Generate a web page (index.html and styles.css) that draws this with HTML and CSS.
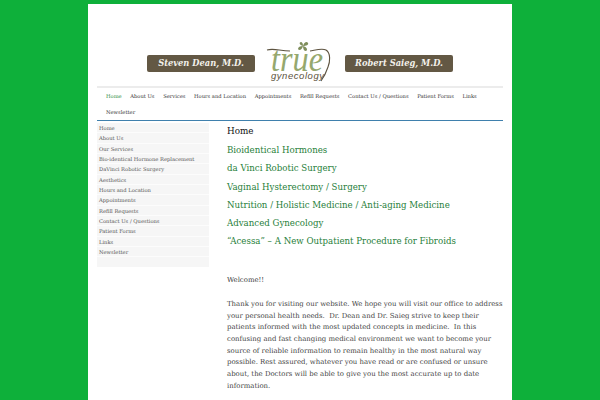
FILE: index.html
```html
<!DOCTYPE html>
<html lang="en">
<head>
  <meta charset="UTF-8">
  <meta name="viewport" content="width=device-width, initial-scale=1.0">
  <title>True Gynecology</title>
  <link rel="stylesheet" href="styles.css">
</head>
<body>
  <div class="page">
    <div class="header">
      <div class="name-plate">Steven Dean, M.D.</div>
      <svg class="logo" width="68" height="50" viewBox="0 0 68 50">
        <text class="logo-true" x="5" y="37" textLength="52" lengthAdjust="spacingAndGlyphs">true</text>
        <path class="logo-swoosh" d="M1 16 C8 14 14 17 24 17 M44 17 C50 16 56 14 60 16 C65 19 64 28 62 33 C60 39 58 43 55 47"/>
        <path class="logo-leaf" d="M37 12 C33 11 33 8 35 8 C36 8 37 9 37 12 C38 8 41 7 42 9 C43 11 40 12 37 12 C41 13 42 16 40 17 C38 17 37 15 37 12 C36 16 33 17 32 15 C32 13 34 12 37 12 Z"/>
        <text class="logo-sub" x="5" y="45" textLength="53">gynecology</text>
      </svg>
      <div class="name-plate">Robert Saieg, M.D.</div>
    </div>

    <ul class="nav">
      <li class="active">Home</li>
      <li>About Us</li>
      <li>Services</li>
      <li>Hours and Location</li>
      <li>Appointments</li>
      <li>Refill Requests</li>
      <li>Contact Us / Questions</li>
      <li>Patient Forms</li>
      <li>Links</li>
      <li>Newsletter</li>
    </ul>

    <div class="main">
      <ul class="sidebar">
        <li>Home</li>
        <li>About Us</li>
        <li>Our Services</li>
        <li>Bio-identical Hormone Replacement</li>
        <li>DaVinci Robotic Surgery</li>
        <li>Aesthetics</li>
        <li>Hours and Location</li>
        <li>Appointments</li>
        <li>Refill Requests</li>
        <li>Contact Us / Questions</li>
        <li>Patient Forms</li>
        <li>Links</li>
        <li>Newsletter</li>
      </ul>

      <div class="content">
        <h1>Home</h1>
        <h2>Bioidentical Hormones</h2>
        <h2>da Vinci Robotic Surgery</h2>
        <h2>Vaginal Hysterectomy / Surgery</h2>
        <h2>Nutrition / Holistic Medicine / Anti-aging Medicine</h2>
        <h2>Advanced Gynecology</h2>
        <h2>“Acessa” – A New Outpatient Procedure for Fibroids</h2>
        <p class="welcome">Welcome!!</p>
        <p>Thank you for visiting our website. We hope you will visit our office to address your personal health needs.&nbsp; Dr. Dean and Dr. Saieg strive to keep their patients informed with the most updated concepts in medicine.&nbsp; In this confusing and fast changing medical environment we want to become your source of reliable information to remain healthy in the most natural way possible. Rest assured, whatever you have read or are confused or unsure about, the Doctors will be able to give you the most accurate up to date information.</p>
      </div>
    </div>
  </div>
</body>
</html>
```

FILE: styles.css
```css
body {
  margin: 0;
  background-color: #0eb03a;
  font-family: "DejaVu Serif", serif;
}

.page {
  width: 406px;
  margin: 4px auto 0;
  padding: 0 9px 30px;
  background-color: #fff;
}

.header {
  height: 84px;
  display: flex;
  align-items: flex-end;
  justify-content: center;
  gap: 11px;
  box-sizing: border-box;
  padding-bottom: 2px;
  border-bottom: 2px solid #ececec;
}

.name-plate {
  width: 108px;
  height: 17px;
  margin-bottom: 12px;
  background-color: #635844;
  border-radius: 2px;
  color: #f2f0ea;
  font-size: 8.3px;
  font-weight: bold;
  font-style: italic;
  line-height: 17px;
  text-align: center;
}

.logo {
  flex: none;
}

.logo-swoosh {
  fill: none;
  stroke: #5d5340;
  stroke-width: 1.1;
}

.logo-leaf {
  fill: #7f8e5c;
}

.logo-true {
  fill: #96a86e;
  font-family: "Liberation Serif", serif;
  font-size: 36px;
  font-style: italic;
}

.logo-sub {
  fill: #5d5340;
  font-family: "Liberation Sans", sans-serif;
  font-size: 9.5px;
  font-style: italic;
}

.nav {
  display: flex;
  flex-wrap: wrap;
  gap: 0 8.6px;
  list-style: none;
  margin: 0;
  padding: 0 0 0 9px;
  border-bottom: 1px solid #3f80ad;
  font-size: 5.2px;
  color: #333;
}

.nav li {
  line-height: 16px;
  height: 16px;
}

.nav .active {
  color: #2d8a3e;
}

.main {
  display: flex;
  margin-top: 2px;
  gap: 18px;
}

.sidebar {
  list-style: none;
  margin: 0;
  padding: 0 0 9.5px;
  width: 112px;
  flex: none;
  align-self: flex-start;
  background-color: #f6f6f6;
  font-size: 5.2px;
  color: #555;
}

.sidebar li {
  height: 10.35px;
  line-height: 10px;
  box-sizing: border-box;
  padding-left: 2px;
  border-bottom: 1px solid #fcfcfc;
}

.content {
  flex: 1;
  min-width: 0;
  margin-right: -1px;
  font-size: 6.93px;
  line-height: 11.65px;
  color: #444;
}

.content h1 {
  margin: 1px 0 5px;
  font-size: 8.8px;
  font-weight: normal;
  line-height: 14px;
  color: #111;
}

.content h2 {
  margin: 0 0 4.3px;
  font-size: 8.65px;
  font-weight: normal;
  line-height: 14px;
  color: #27803a;
}

.content p {
  margin: 0;
}

.content .welcome {
  margin: 27px 0 12px;
}
```
